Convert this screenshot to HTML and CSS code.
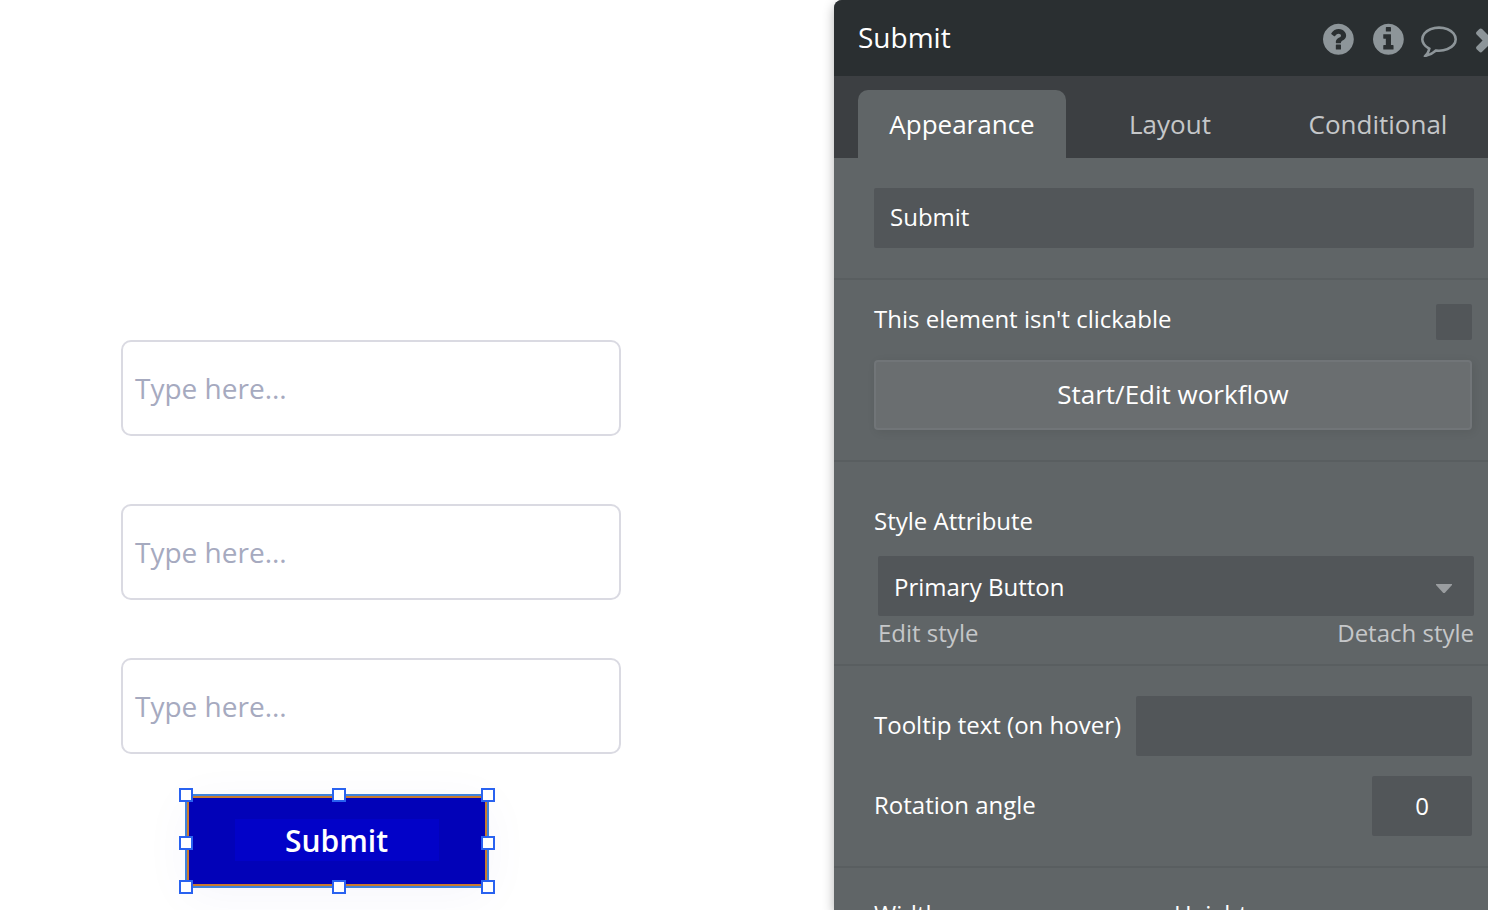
FILE: index.html
```html
<!DOCTYPE html>
<html lang="en">
<head>
<meta charset="utf-8">
<title>Submit</title>
<link rel="stylesheet" href="styles.css">
</head>
<body>
<div class="editor">
  <main class="canvas">
    <div class="field field-first">Type here...</div>
    <div class="field field-second">Type here...</div>
    <div class="field">Type here...</div>
    <div class="selected-button">
      <span class="button-label">Submit</span>
      <i class="handle top left"></i><i class="handle top center"></i><i class="handle top right"></i>
      <i class="handle middle left"></i><i class="handle middle right"></i>
      <i class="handle bottom left"></i><i class="handle bottom center"></i><i class="handle bottom right"></i>
    </div>
  </main>
  <aside class="panel">
    <header class="panel-header">
      <h1 class="panel-title">Submit</h1>
      <div class="panel-icons">
        <svg class="icon" viewBox="-20 -15 1792 1792"><path d="M1024 1376v-192q0-14-9-23t-23-9h-192q-14 0-23 9t-9 23v192q0 14 9 23t23 9h192q14 0 23-9t9-23zM1280 704q0-88-55.5-163t-138.5-116-170-41q-243 0-371 213-15 24 8 42l132 100q7 6 19 6 16 0 25-12 53-68 86-92 34-24 86-24 48 0 85.5 26t37.5 59q0 38-20 61t-68 45q-63 28-115.5 86.5t-52.5 125.5v36q0 14 9 23t23 9h192q14 0 23-9t9-23q0-19 21.5-49.5t54.5-49.5q32-18 49-28.5t46-35 44.5-48 28-60.5 12.5-81zM1664 896q0 209-103 385.5t-279.5 279.5-385.5 103-385.5-103-279.5-279.5-103-385.5 103-385.5 279.5-279.5 385.5-103 385.5 103 279.5 279.5 103 385.5z"/></svg>
        <svg class="icon" viewBox="-20 -15 1792 1792"><path d="M1152 1376v-160q0-14-9-23t-23-9h-96v-512q0-14-9-23t-23-9h-320q-14 0-23 9t-9 23v160q0 14 9 23t23 9h96v320h-96q-14 0-23 9t-9 23v160q0 14 9 23t23 9h448q14 0 23-9t9-23zM1024 480v-160q0-14-9-23t-23-9h-192q-14 0-23 9t-9 23v160q0 14 9 23t23 9h192q14 0 23-9t9-23zM1664 896q0 209-103 385.5t-279.5 279.5-385.5 103-385.5-103-279.5-279.5-103-385.5 103-385.5 279.5-279.5 385.5-103 385.5 103 279.5 279.5 103 385.5z"/></svg>
        <svg class="icon icon-comment" viewBox="0 -10 1792 1792"><path d="M896 384q-204 0-381.5 69.5t-282 187.5-104.5 255q0 112 71.5 213.5t201.5 175.5l87 50-27 96q-24 91-70 172 152-63 275-171l43-38 57 6q69 8 130 8 204 0 381.5-69.5t282-187.5 104.5-255-104.5-255-282-187.5-381.5-69.5zM1792 896q0 174-120 321.5t-326 233-450 85.5q-70 0-145-8-198 175-460 242-49 14-114 22h-5q-15 0-27-10.5t-16-27.5v-1q-3-4-.5-12t2-10 4.5-9.5l6-9 7-8.5 8-9q7-8 31-34.5t34.5-38 31-39.5 32.5-51 27-59 26-76q-157-89-247.5-220t-90.5-281q0-174 120-321.5t326-233 450-85.5 450 85.5 326 233 120 321.5z"/></svg>
        <svg class="icon" viewBox="0 -10 1792 1792"><path d="M1490 1322q0 40-28 68l-136 136q-28 28-68 28t-68-28l-294-294-294 294q-28 28-68 28t-68-28l-136-136q-28-28-28-68t28-68l294-294-294-294q-28-28-28-68t28-68l136-136q28-28 68-28t68 28l294 294 294-294q28-28 68-28t68 28l136 136q28 28 28 68t-28 68l-294 294 294 294q28 28 28 68z"/></svg>
      </div>
    </header>
    <nav class="tabs">
      <span class="tab tab-active">Appearance</span>
      <span class="tab">Layout</span>
      <span class="tab">Conditional</span>
    </nav>
    <section class="group group-name">
      <div class="box name-box">Submit</div>
    </section>
    <section class="group group-click">
      <div class="row">
        <span class="label">This element isn't clickable</span>
        <span class="checkbox"></span>
      </div>
      <div class="workflow-button">Start/Edit workflow</div>
    </section>
    <section class="group group-style">
      <span class="label">Style Attribute</span>
      <div class="box dropdown">Primary Button
        <svg class="caret" viewBox="0 0 16 9"><path d="M0 0h16v1L8.7 9H7.3L0 1z"/></svg>
      </div>
      <div class="links"><span>Edit style</span><span>Detach style</span></div>
    </section>
    <section class="group group-misc">
      <div class="row">
        <span class="label">Tooltip text (on hover)</span>
        <div class="box tooltip-box"></div>
      </div>
      <div class="row">
        <span class="label">Rotation angle</span>
        <div class="box angle-box">0</div>
      </div>
    </section>
    <section class="group-size">
      <span class="label">Width</span>
      <span class="label">Height</span>
    </section>
  </aside>
</div>
</body>
</html>
```

FILE: styles.css
```css
* { box-sizing: border-box; }

body {
  margin: 0;
  overflow: hidden;
  background: #fff;
  font-family: "Open Sans", sans-serif;
}

.editor {
  display: flex;
  width: 1488px;
  height: 910px;
  overflow: hidden;
}

.canvas {
  flex: 0 0 834px;
  padding: 340px 0 0 121px;
}

.field {
  display: flex;
  align-items: center;
  width: 500px;
  height: 96px;
  padding: 0 12px;
  border: 2px solid #dadae2;
  border-radius: 10px;
  color: #a6aabf;
  font-size: 28px;
}

.field-first { margin-bottom: 68px; }
.field-second { margin-bottom: 58px; }

.selected-button {
  position: relative;
  display: flex;
  align-items: center;
  justify-content: center;
  width: 304px;
  height: 94px;
  margin: 40px 0 0 64px;
  border: 2px solid #3f83dc;
  outline: 2px solid #c87a2e;
  outline-offset: -4px;
  background: #0202b8;
  box-shadow: 0 8px 50px rgba(2, 2, 184, 0.04);
}

.button-label {
  width: 204px;
  height: 42px;
  margin: -2px 0 0;
  padding-right: 1px;
  background: #0202c8;
  color: #fff;
  font-size: 30px;
  font-weight: 600;
  line-height: 44px;
  text-align: center;
}

.handle {
  position: absolute;
  width: 14px;
  height: 14px;
  border: 2px solid #2962f0;
  background: #fff;
}

.top { top: -8px; }
.middle { top: 40px; }
.bottom { bottom: -8px; }
.left { left: -8px; }
.center { left: 145px; }
.right { right: -8px; }

.panel {
  flex: 0 0 654px;
  border-top-left-radius: 8px;
  background: #606567;
  box-shadow: 0 4px 12px rgba(0, 0, 0, 0.3);
  color: #fff;
  font-size: 24px;
  line-height: 34px;
}

.panel-header {
  display: flex;
  align-items: flex-start;
  height: 76px;
  padding-left: 24px;
  overflow: hidden;
  border-top-left-radius: 8px;
  background: #2a2f31;
}

.panel-title {
  flex: 0 0 462px;
  margin: 18px 0 0;
  font-size: 28px;
  font-weight: 400;
  line-height: 38px;
}

.panel-icons {
  display: flex;
  flex: none;
  gap: 14px;
  padding-top: 21px;
}

.icon {
  flex: none;
  width: 36px;
  height: 36px;
  fill: #8d9599;
}

.icon-comment { margin: 0 -1px 0 1px; }

.tabs {
  display: flex;
  height: 82px;
  padding: 14px 0 0 24px;
  background: #3c3f42;
  font-size: 26px;
}

.tab {
  width: 208px;
  height: 68px;
  color: #c5c7c9;
  line-height: 68px;
  text-align: center;
}

.tab-active {
  border-radius: 10px 10px 0 0;
  background: #606567;
  color: #fff;
}

.group {
  padding-left: 40px;
  border-bottom: 2px solid #595e60;
}

.group-name { height: 122px; padding-top: 30px; }
.group-click { height: 182px; padding-top: 24px; }
.group-style { height: 204px; padding-top: 42px; }
.group-misc { height: 202px; padding-top: 30px; }

.label { white-space: nowrap; }

.box {
  height: 60px;
  border-radius: 2px;
  background: #525659;
  line-height: 60px;
}

.name-box {
  width: 600px;
  padding-left: 16px;
  line-height: 58px;
}

.row {
  display: flex;
  justify-content: space-between;
  width: 598px;
}

.checkbox {
  width: 36px;
  height: 36px;
  border-radius: 2px;
  background: #525659;
}

.group-click .row {
  height: 56px;
  line-height: 30px;
}

.workflow-button {
  width: 598px;
  height: 70px;
  border: 2px solid #717578;
  border-radius: 4px;
  background: #6a6e70;
  box-shadow: 2px 2px 10px rgba(0, 0, 0, 0.08);
  font-size: 26px;
  line-height: 64px;
  text-align: center;
}

.dropdown {
  display: flex;
  align-items: center;
  justify-content: space-between;
  width: 596px;
  margin: 18px 0 0 4px;
  padding: 2px 22px 0 16px;
}

.group-style .label { display: block; }

.caret {
  width: 16px;
  height: 9px;
  margin-top: 3px;
  fill: #9a9da0;
}

.links {
  display: flex;
  justify-content: space-between;
  width: 596px;
  margin-left: 4px;
  color: #c5c7c9;
}

.group-misc .row { height: 80px; line-height: 58px; }
.tooltip-box { width: 336px; }
.angle-box { width: 100px; text-align: center; }

.group-size {
  display: grid;
  grid-template-columns: 300px 1fr;
  height: 42px;
  padding: 29px 0 0 40px;
  overflow: hidden;
}
```
